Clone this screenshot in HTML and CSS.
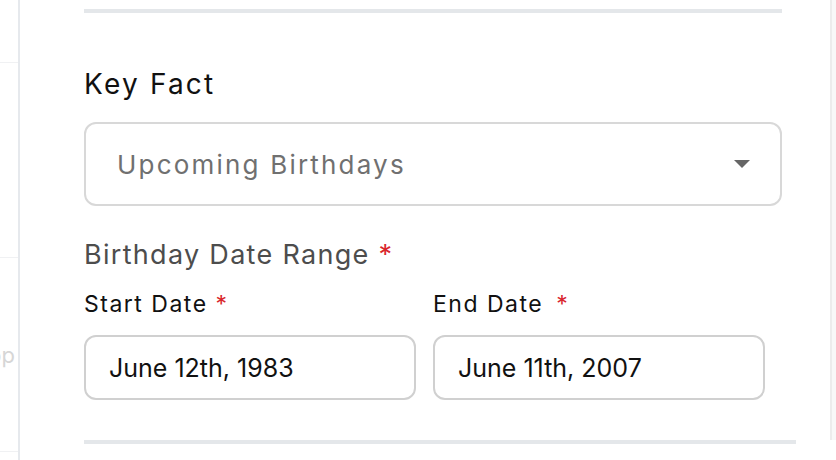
FILE: index.html
```html
<!DOCTYPE html>
<html>
	<head>
		<meta charset="utf-8">
		<meta name="viewport" content="width=device-width, initial-scale=1">
		<title>Key Fact</title>
		<link rel="stylesheet" href="styles.css">
	</head>
	<body>
		<div class="layout">
			<aside class="side">
				<div class="side-row side-row-1"></div>
				<div class="side-row side-row-2"></div>
				<div class="side-row side-row-3"><span class="side-text">App</span></div>
			</aside>

			<main class="panel">
				<hr class="rule rule-top">

				<h2 class="section-title">Key Fact</h2>
				<div class="select">
					<span class="select-value">Upcoming Birthdays</span>
					<span class="caret"></span>
				</div>

				<div class="group-label">Birthday Date Range <span class="req">*</span></div>
				<div class="date-row">
					<div class="date-field">
						<label class="field-label">Start Date <span class="req">*</span></label>
						<div class="input">June 12th, 1983</div>
					</div>
					<div class="date-field">
						<label class="field-label">End Date <span class="req req-wide">*</span></label>
						<div class="input">June 11th, 2007</div>
					</div>
				</div>

				<hr class="rule rule-bottom">
			</main>

			<div class="gutter"></div>
		</div>
	</body>
</html>
```

FILE: styles.css
```css
* {
	box-sizing: border-box;
}

html, body {
	margin: 0;
	background: #fff;
}

body {
	font-family: Inter, "Noto Sans", sans-serif;
	color: #111;
}

.layout {
	display: flex;
	height: 460px;
	overflow: hidden;
}

/* left list, mostly cut off */
.side {
	width: 20px;
	flex: none;
	border-right: 2px solid #e6e9ed;
}

.side-row {
	border-bottom: 1px solid #f0f1f3;
	overflow: hidden;
}

.side-row-1 {
	height: 63px;
}

.side-row-2 {
	height: 195px;
}

.side-row-3 {
	height: 194px;
	display: flex;
	align-items: center;
	justify-content: flex-end;
}

.side-text {
	font-size: 22px;
	color: #d6d6d6;
	white-space: nowrap;
	margin-right: 3px;
}

.panel {
	width: 810px;
	flex: none;
	padding: 9px 0 0 64px;
}

.gutter {
	flex: 1;
	height: 440px;
	background: #f8f8f8;
	border-left: 2px solid #ececec;
}

.rule {
	margin: 0;
	border: none;
	height: 4px;
	background: #e4e7ea;
}

.rule-top {
	width: 698px;
}

.rule-bottom {
	width: 712px;
	margin-top: 40px;
}

.section-title {
	margin: 54px 0 0;
	font-size: 28px;
	line-height: 34px;
	font-weight: 400;
	letter-spacing: 2.2px;
	color: #111;
}

.select {
	margin-top: 21px;
	width: 698px;
	height: 84px;
	border: 2px solid #d8d8d8;
	border-radius: 12px;
	display: flex;
	align-items: center;
	justify-content: space-between;
	padding: 0 30px 0 31px;
}

.select-value {
	font-size: 26px;
	letter-spacing: 2.2px;
	color: #707070;
}

.caret {
	width: 0;
	height: 0;
	border-left: 8px solid transparent;
	border-right: 8px solid transparent;
	border-top: 8px solid #666;
}

.group-label {
	margin-top: 32px;
	font-size: 27px;
	line-height: 34px;
	letter-spacing: 1.3px;
	color: #4d4d4d;
}

.req {
	color: #d9262c;
}

.req-wide {
	margin-left: 5px;
}

.date-row {
	display: flex;
	gap: 17px;
	margin-top: 17px;
}

.date-field {
	width: 332px;
	display: flex;
	flex-direction: column;
}

.field-label {
	font-size: 23px;
	line-height: 30px;
	letter-spacing: 1.5px;
	color: #111;
}

.input {
	margin-top: 16px;
	height: 65px;
	border: 2px solid #d0d0d0;
	border-radius: 12px;
	display: flex;
	align-items: center;
	padding: 0 23px;
	font-size: 25px;
	color: #111;
}
```
